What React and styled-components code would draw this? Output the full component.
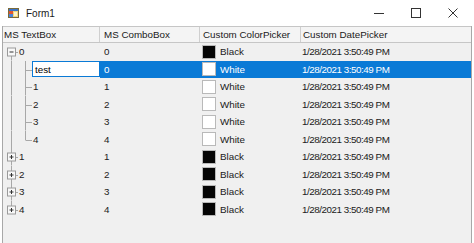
import React from 'react';
import styled, { createGlobalStyle } from 'styled-components';

const GlobalStyle = createGlobalStyle`
  html, body {
    margin: 0;
    padding: 0;
    background: #ffffff;
  }
  body {
    width: 474px;
    height: 243px;
    overflow: hidden;
    font-family: "Liberation Sans", Arial, sans-serif;
  }
`;

const COLS = '97px 100px 101px 1fr';

const Window = styled.div`
  width: 474px;
  height: 243px;
  display: flex;
  flex-direction: column;
  background: #ffffff;
`;

const TitleBar = styled.div`
  height: 26px;
  display: flex;
  align-items: center;
  padding-left: 8px;
  background: #ffffff;
`;

const Title = styled.span`
  margin-left: 7px;
  font-size: 10px;
  color: #1a1a1a;
`;

const Controls = styled.div`
  margin-left: auto;
  display: flex;
  height: 100%;
  margin-right: 3px;
`;

const ControlButton = styled.div`
  width: 37px;
  height: 100%;
  display: flex;
  align-items: center;
  justify-content: center;
`;

const Grid = styled.div`
  flex: 1;
  margin: 0 2px 0 2px;
  border-left: 1px solid #a8a8a8;
  border-right: 1px solid #a8a8a8;
  background: #f0f0f0;
  display: flex;
  flex-direction: column;
`;

const HeaderRow = styled.div`
  display: grid;
  grid-template-columns: ${COLS};
  height: 15px;
  background: #f4f4f4;
  border-top: 1px solid #c6c6c6;
  border-bottom: 1px solid #c6c6c6;
`;

const HeaderCell = styled.div`
  display: flex;
  align-items: center;
  padding-left: ${p => p.$pad}px;
  font-size: 9.8px;
  color: #1a1a1a;
  white-space: nowrap;
  overflow: hidden;
  border-right: ${p => (p.$last ? 'none' : '1px solid #cfcfcf')};
`;

const Row = styled.div`
  display: grid;
  grid-template-columns: ${COLS};
  height: 17.5px;
`;

const Cell = styled.div`
  display: flex;
  align-items: center;
  padding-left: ${p => p.$pad}px;
  font-size: 9.8px;
  white-space: nowrap;
  overflow: hidden;
  letter-spacing: ${p => (p.$tight ? '-0.45px' : 'normal')};
  color: ${p => (p.$selected ? '#ffffff' : '#1a1a1a')};
  background: ${p => (p.$selected ? '#0a7ad6' : 'transparent')};
`;

const TreeCell = styled.div`
  display: flex;
  align-items: center;
  font-size: 9.8px;
  color: #1a1a1a;
  white-space: nowrap;
`;

const TreeGlyph = styled.svg`
  flex: none;
  display: block;
`;

const Editor = styled.div`
  flex: 1;
  height: 16px;
  box-sizing: border-box;
  margin-left: -1px;
  border: 1px solid #0a7ad6;
  background: #ffffff;
  display: flex;
  align-items: center;
  padding-left: 2px;
  font-size: 9.8px;
  color: #000;
`;

const Swatch = styled.div`
  width: 14px;
  height: 14px;
  box-sizing: border-box;
  margin-right: 4px;
  border: 1px solid #b9b9b9;
  background: ${p => (p.$color === 'Black' ? '#050505' : '#ffffff')};
  flex: none;
`;

const AppIcon = () => (
  <svg width="11" height="10" viewBox="0 0 11 10">
    <rect x="0.5" y="0.5" width="10" height="9" fill="#f4d67a" stroke="#7a6a3a" />
    <rect x="1" y="1" width="9" height="2" fill="#3b74c6" />
    <rect x="1" y="3" width="4" height="3" fill="#e2552e" />
    <rect x="1" y="6" width="4" height="3" fill="#4a86d8" />
    <rect x="6" y="4" width="3" height="4" fill="#fff4c8" />
  </svg>
);

const Minimize = () => (
  <svg width="10" height="10" viewBox="0 0 10 10">
    <line x1="0" y1="5.5" x2="10" y2="5.5" stroke="#333" strokeWidth="1" />
  </svg>
);

const Maximize = () => (
  <svg width="10" height="10" viewBox="0 0 10 10">
    <rect x="0.5" y="0.5" width="9" height="9" fill="none" stroke="#333" strokeWidth="1" />
  </svg>
);

const Close = () => (
  <svg width="10" height="10" viewBox="0 0 10 10">
    <path d="M0.5 0.5 L9.5 9.5 M9.5 0.5 L0.5 9.5" stroke="#333" strokeWidth="1" />
  </svg>
);

// tree glyph: kind = rootOpen | child | childLast | root | rootLast
const Tree = ({ kind, width }) => {
  const h = 17.5;
  const m = 9;
  const line = '#a8a8a8';
  const isRoot = kind.startsWith('root');
  const box = (
    <g>
      <rect x="4.5" y={m - 4} width="8" height="8" fill="#f8f8f8" stroke="#9a9a9a" />
      <line x1="6.5" y1={m} x2="10.5" y2={m} stroke="#333" />
      {kind !== 'rootOpen' && <line x1="8.5" y1={m - 2} x2="8.5" y2={m + 2} stroke="#333" />}
    </g>
  );
  return (
    <TreeGlyph width={width} height={h} viewBox={`0 0 ${width} ${h}`}>
      {kind === 'rootOpen' && <line x1="8.5" y1={m + 4} x2="8.5" y2={h} stroke={line} />}
      {kind === 'root' && <line x1="8.5" y1="0" x2="8.5" y2={h} stroke={line} />}
      {kind === 'rootLast' && <line x1="8.5" y1="0" x2="8.5" y2={m - 4} stroke={line} />}
      {!isRoot && <line x1="8.5" y1="0" x2="8.5" y2={h} stroke={line} />}
      {kind === 'child' && <line x1="22.5" y1="0" x2="22.5" y2={h} stroke={line} />}
      {kind === 'childLast' && <line x1="22.5" y1="0" x2="22.5" y2={m} stroke={line} />}
      {!isRoot && <line x1="22.5" y1={m + 0.5} x2="29" y2={m + 0.5} stroke={line} />}
      {isRoot && <line x1="12.5" y1={m + 0.5} x2="15" y2={m + 0.5} stroke={line} />}
      {isRoot && box}
    </TreeGlyph>
  );
};

const DATE = '1/28/2021 3:50:49 PM';

const rows = [
  { kind: 'rootOpen', text: '0', combo: '0', color: 'Black' },
  { kind: 'child', text: 'test', combo: '0', color: 'White', editing: true },
  { kind: 'child', text: '1', combo: '1', color: 'White' },
  { kind: 'child', text: '2', combo: '2', color: 'White' },
  { kind: 'child', text: '3', combo: '3', color: 'White' },
  { kind: 'childLast', text: '4', combo: '4', color: 'White' },
  { kind: 'root', text: '1', combo: '1', color: 'Black' },
  { kind: 'root', text: '2', combo: '2', color: 'Black' },
  { kind: 'root', text: '3', combo: '3', color: 'Black' },
  { kind: 'rootLast', text: '4', combo: '4', color: 'Black' },
];

const headers = [
  { label: 'MS TextBox', pad: 1 },
  { label: 'MS ComboBox', pad: 4 },
  { label: 'Custom ColorPicker', pad: 3 },
  { label: 'Custom DatePicker', pad: 2 },
];

export default function App() {
  return (
    <>
      <GlobalStyle />
      <Window>
        <TitleBar>
          <AppIcon />
          <Title>Form1</Title>
          <Controls>
            <ControlButton><Minimize /></ControlButton>
            <ControlButton><Maximize /></ControlButton>
            <ControlButton><Close /></ControlButton>
          </Controls>
        </TitleBar>
        <Grid>
          <HeaderRow>
            {headers.map((h, i) => (
              <HeaderCell key={h.label} $pad={h.pad} $last={i === headers.length - 1}>
                {h.label}
              </HeaderCell>
            ))}
          </HeaderRow>
          {rows.map((r, i) => {
            const isRoot = r.kind.startsWith('root');
            return (
              <Row key={i}>
                <TreeCell>
                  <Tree kind={r.kind} width={isRoot ? 16 : 30} />
                  {r.editing ? <Editor>{r.text}</Editor> : r.text}
                </TreeCell>
                <Cell $pad={4} $selected={r.editing}>{r.combo}</Cell>
                <Cell $pad={2} $selected={r.editing}>
                  <Swatch $color={r.color} />
                  {r.color}
                </Cell>
                <Cell $pad={1} $tight $selected={r.editing}>{DATE}</Cell>
              </Row>
            );
          })}
        </Grid>
      </Window>
    </>
  );
}
